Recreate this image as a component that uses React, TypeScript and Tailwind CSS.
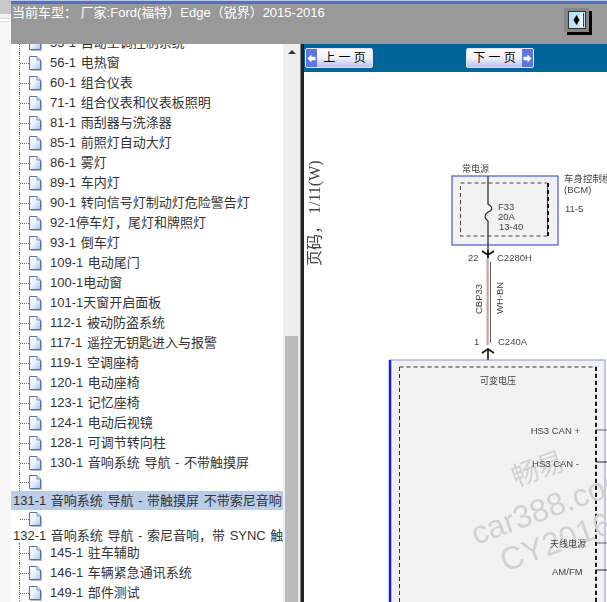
import React from 'react';

const FONT = '"Liberation Sans", "Noto Sans CJK SC", sans-serif';

const topRows = [
  '55-1 自动空调控制系统',
  '56-1 电热窗',
  '60-1 组合仪表',
  '71-1 组合仪表和仪表板照明',
  '81-1 雨刮器与洗涤器',
  '85-1 前照灯自动大灯',
  '86-1 雾灯',
  '89-1 车内灯',
  '90-1 转向信号灯制动灯危险警告灯',
  '92-1停车灯，尾灯和牌照灯',
  '93-1 倒车灯',
  '109-1 电动尾门',
  '100-1电动窗',
  '101-1天窗开启面板',
  '112-1 被动防盗系统',
  '117-1 遥控无钥匙进入与报警',
  '119-1 空调座椅',
  '120-1 电动座椅',
  '123-1 记忆座椅',
  '124-1 电动后视镜',
  '128-1 可调节转向柱',
  '130-1 音响系统 导航 - 不带触摸屏',
];

const bottomRows = ['145-1 驻车辅助', '146-1 车辆紧急通讯系统', '149-1 部件测试'];

// Page icon used by every tree leaf
const DocIcon = () => (
  <svg width="13" height="15" viewBox="0 0 13 15" className="shrink-0">
    <defs>
      <linearGradient id="docFill" x1="0" y1="0" x2="1" y2="1">
        <stop offset="0" stopColor="#ffffff" />
        <stop offset="0.5" stopColor="#e8f0fc" />
        <stop offset="1" stopColor="#a4c2f0" />
      </linearGradient>
    </defs>
    <path d="M1.5 14.5H12.5V5" fill="none" stroke="#b8b8c4" strokeWidth="1" />
    <path d="M0.5 0.5H8L11.5 4V13.5H0.5Z" fill="url(#docFill)" stroke="#5f6f9c" strokeWidth="1" />
    <path d="M8 0.5V4H11.5" fill="#dfe8f8" stroke="#7d8cb4" strokeWidth="1" />
  </svg>
);

const Connector = ({ line = true }: { line?: boolean }) => (
  <>
    <span className={`ml-[8px] h-full border-l border-dotted ${line ? 'border-[#666666]' : 'border-transparent'}`} />
    <span className="w-[9px] border-t border-dotted border-[#666666]" />
  </>
);

const TreeRow = ({ label }: { label: string }) => (
  <div className="flex h-5 items-center">
    <Connector />
    <DocIcon />
    <span className="ml-[8px] whitespace-nowrap">{label}</span>
  </div>
);

const NavButton = ({ label, dir }: { label: string; dir: 'prev' | 'next' }) => {
  const arrow = (
    <span className="flex h-full w-[11px] items-center justify-center bg-[#5f74e0]">
      <svg width="9" height="9" viewBox="0 0 9 9">
        {dir === 'prev' ? (
          <path d="M0.5 4.5L4.5 0.5V2.8H8.5V6.2H4.5V8.5Z" fill="#ffffff" />
        ) : (
          <path d="M8.5 4.5L4.5 0.5V2.8H0.5V6.2H4.5V8.5Z" fill="#ffffff" />
        )}
      </svg>
    </span>
  );
  return (
    <button className="flex h-[20px] w-[68px] items-center overflow-hidden rounded-[2px] border border-[#dfe3fa] bg-gradient-to-b from-[#ffffff] via-[#eef0fc] to-[#b9c1ee]">
      {dir === 'prev' && arrow}
      <span className="flex-1 whitespace-pre text-center text-[12px] leading-none text-black">{label}</span>
      {dir === 'next' && arrow}
    </button>
  );
};

const Wiring = () => (
  <svg viewBox="304 72 303 530" className="h-[530px] w-[303px] blur-[0.35px]" fontFamily={FONT} fill="#444444">
    <text transform="translate(320 266) rotate(-90)" fontSize="16" fontFamily='"Liberation Serif", "Noto Sans CJK SC", serif' fill="#444444">页码， 1/11(W)</text>

    {/* top module */}
    <rect x="452" y="176" width="106" height="69" fill="#f2f2f2" stroke="#4a55d8" strokeWidth="1.2" />
    <rect x="460.5" y="183" width="87" height="53" fill="none" stroke="#444444" strokeDasharray="4 3" />
    <path d="M548 183V236" stroke="#111111" strokeWidth="2" strokeDasharray="4 3" />
    <text x="462" y="172" fontSize="9">常电源</text>
    <text x="564" y="182" fontSize="9.5">车身控制模块</text>
    <text x="564" y="193" fontSize="9.5">(BCM)</text>
    <text x="565" y="212" fontSize="9.5">11-5</text>
    <text x="498" y="210" fontSize="9.5">F33</text>
    <text x="498" y="220" fontSize="9.5">20A</text>
    <text x="499" y="230" fontSize="9.5">13-40</text>
    <path d="M488 176V204C493 207 493 210 488 212C484 215 484 218 488 221V258" fill="none" stroke="#222222" strokeWidth="1.2" />
    <path d="M482 251L488 255L494 251M488 250V258" fill="none" stroke="#111111" strokeWidth="1.6" />
    <text x="468" y="261" fontSize="9.5">22</text>
    <text x="497" y="261" fontSize="9.5">C2280H</text>

    {/* wire */}
    <path d="M488 258V345" stroke="#d9a3a3" strokeWidth="1.6" />
    <path d="M490.5 262V343" stroke="#333333" strokeWidth="0.8" />
    <path d="M487 258V345" stroke="#666666" strokeWidth="0.5" />
    <text transform="translate(482 314) rotate(-90)" fontSize="9.5">CBP33</text>
    <text transform="translate(503 314) rotate(-90)" fontSize="9.5">WH-BN</text>
    <text x="474" y="345" fontSize="9.5">1</text>
    <text x="498" y="345" fontSize="9.5">C240A</text>
    <path d="M482 353L488 349L494 353M488 348V368" fill="none" stroke="#111111" strokeWidth="1.6" />

    {/* bottom module */}
    <rect x="390" y="360" width="215" height="260" fill="#f2f2f2" stroke="#8a90e0" strokeWidth="1" />
    <path d="M390 360V602" stroke="#1a1aee" strokeWidth="2.5" />
    <rect x="399.5" y="367" width="196.5" height="250" fill="none" stroke="#333333" strokeDasharray="4 3" />
    <path d="M596 367V602" stroke="#111111" strokeWidth="1.8" strokeDasharray="4 3" />

    {/* watermark */}
    <g fill="#d2d2d2">
      <text transform="translate(516 487) rotate(-20)" fontSize="27">畅易</text>
      <text transform="translate(476 545) rotate(-20)" fontSize="32">car388.com</text>
      <text transform="translate(505 572) rotate(-20)" fontSize="32">CY2016</text>
    </g>

    <text x="480" y="384" fontSize="9">可变电压</text>
    <text x="580" y="434" fontSize="9.5" textAnchor="end">HS3 CAN +</text>
    <text x="579" y="467" fontSize="9.5" textAnchor="end">HS3 CAN -</text>
    <text x="550" y="547" fontSize="9">天线电源</text>
    <text x="552" y="575" fontSize="9.5">AM/FM</text>
    <path d="M596 430H607" stroke="#666666" />
    <path d="M596 462H607" stroke="#222222" />
    <path d="M596 543H607" stroke="#666666" />
    <path d="M596 570H607" stroke="#222222" />
  </svg>
);

export default function App() {
  return (
    <div className="flex h-[602px] w-[607px] overflow-hidden bg-white" style={{ fontFamily: FONT }}>
      {/* strip of the window behind */}
      <div className="flex w-[11px] shrink-0 flex-col bg-[#f7f7f7]">
        <div className="h-[14px] bg-[#c9c9c9]" />
        <div className="h-[4px] bg-[#f2f2f2]" />
        <div className="h-[1px] bg-[#dddddd]" />
        <div className="h-[2px] bg-[#ffffff]" />
        <div className="h-[1px] bg-[#dddddd]" />
      </div>

      <div className="flex min-w-0 flex-1 flex-col">
        {/* title bar */}
        <div className="h-[44px] shrink-0 bg-[#999999]">
          <div className="h-[1px] bg-[#b9c7e8]" />
          <div className="h-[3px] bg-[#4f70c4]" />
          <div className="flex justify-between">
            <span className="ml-px mt-[1px] whitespace-nowrap text-[13px] leading-[16px] text-white">
              当前车型： 厂家:Ford(福特）Edge（锐界）2015-2016
            </span>
            <div className="mr-[18px] mt-[4px] flex h-[24px] w-[25px] items-center justify-center bg-[#858585] shadow-[3px_3px_0_#000000]">
              <div className="flex h-[18px] w-[18px] items-center justify-center border border-[#333333] bg-[#b4e6ff]">
                <svg width="14" height="14" viewBox="0 0 14 14">
                  <path d="M6.5 2L9.5 7L6.5 12L3.5 7Z" fill="#000000" />
                  <rect x="10" y="0" width="3" height="14" fill="#ffffff" />
                  <rect x="13" y="0" width="1" height="14" fill="#444444" />
                </svg>
              </div>
            </div>
          </div>
        </div>

        <div className="flex min-h-0 flex-1">
          {/* tree */}
          <div className="h-full w-[272px] shrink-0 overflow-hidden text-[13px] text-[#333333] [word-spacing:1px]">
            <div className="-mt-[11px]">
              {topRows.map((label) => (
                <TreeRow key={label} label={label} />
              ))}
              <div className="flex h-[18px] items-center">
                <Connector />
                <DocIcon />
              </div>
              <div className="flex h-[19px] items-center whitespace-nowrap bg-[#b9cce8] pl-[2px]">
                131-1 音响系统 导航 - 带触摸屏 不带索尼音响
              </div>
              <div className="flex h-[18px] items-center">
                <Connector line={false} />
                <DocIcon />
              </div>
              <div className="flex h-[15px] items-center whitespace-nowrap pl-[2px]">
                132-1 音响系统 导航 - 索尼音响，带 SYNC 触摸屏
              </div>
              {bottomRows.map((label) => (
                <TreeRow key={label} label={label} />
              ))}
            </div>
          </div>

          {/* scrollbar */}
          <div className="flex h-full w-[17px] shrink-0 flex-col items-center bg-[#eeeeee]">
            <div className="mt-[6px] h-0 w-0 border-x-[4px] border-b-[4px] border-x-transparent border-b-[#333333]" />
            <div className="mt-[282px] w-[13px] flex-1 bg-[#bbbbbb]" />
          </div>

          {/* splitter */}
          <div className="h-full w-[4px] shrink-0 border-l border-[#888888] bg-[#222222]" />

          {/* page view */}
          <div className="flex min-w-0 flex-1 flex-col">
            <div className="flex h-[28px] shrink-0 items-center bg-[#006699] pl-px">
              <NavButton label="上 一 页" dir="prev" />
              <div className="ml-[93px]">
                <NavButton label="下 一 页" dir="next" />
              </div>
            </div>
            <Wiring />
          </div>
        </div>
      </div>
    </div>
  );
}
